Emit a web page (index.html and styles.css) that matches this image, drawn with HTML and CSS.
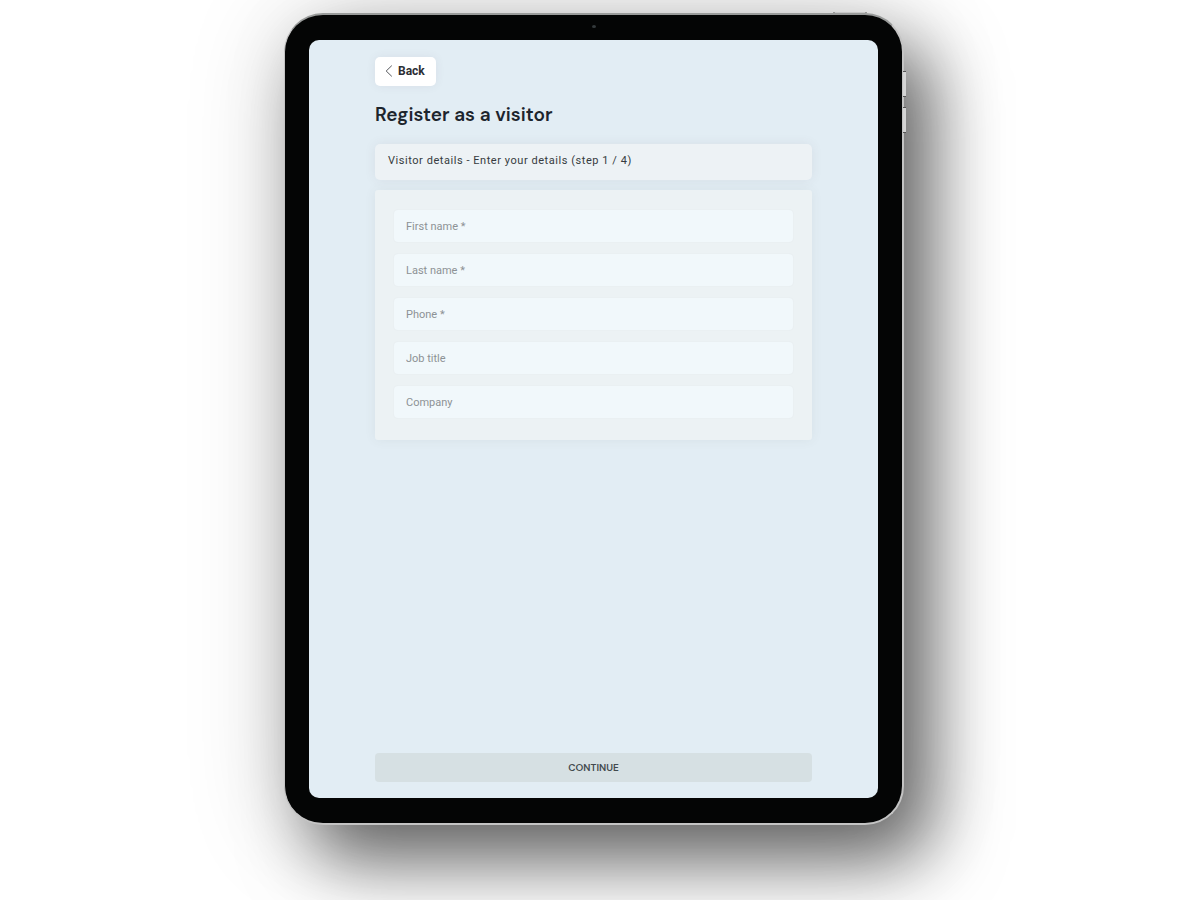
FILE: index.html
```
<!DOCTYPE html>
<html lang="en">
<head>
    <meta charset="UTF-8">
    <meta name="viewport" content="width=device-width, initial-scale=1.0">
    <title>Register as a visitor</title>
    <link rel="stylesheet" href="styles.css">
</head>
<body>
    <div class="stage">
        <div class="tablet">
            <span class="camera"></span>
            <span class="power-button"></span>
            <span class="volume-button up"></span>
            <span class="volume-button down"></span>
            <form class="screen" id="visitorForm">
                <button type="button" class="back-button">
                    <svg width="8" height="12" viewBox="0 0 8 12" fill="none" stroke="currentColor" stroke-width="0.8" aria-hidden="true">
                        <path d="M6.8 0.6 L1.2 6 L6.8 11.4"/>
                    </svg>
                    Back
                </button>
                <h1>Register as a visitor</h1>
                <div class="step">Visitor details - Enter your details (step 1 / 4)</div>
                <div class="fields">
                    <input type="text" name="firstName" placeholder="First name *" aria-label="First name" required>
                    <input type="text" name="lastName" placeholder="Last name *" aria-label="Last name" required>
                    <input type="tel" name="phone" placeholder="Phone *" aria-label="Phone" required>
                    <input type="text" name="jobTitle" placeholder="Job title" aria-label="Job title">
                    <input type="text" name="company" placeholder="Company" aria-label="Company">
                </div>
                <button type="submit" class="continue-button">CONTINUE</button>
            </form>
        </div>
    </div>
</body>
</html>
```
FILE: styles.css
```
* {
    box-sizing: border-box;
}
body {
    margin: 0;
    background-color: #fff;
    font-family: Roboto, 'Liberation Sans', sans-serif;
    color: #1d252d;
}
.stage {
    display: flex;
    justify-content: center;
    min-height: 100vh;
    padding: 13px 12px 75px 0;
    overflow: hidden;
}
/* the tablet frame */
.tablet {
    position: relative;
    display: flex;
    width: 100%;
    max-width: 620px;
    padding: 25px 24px;
    border: 2px solid #c4c4c4;
    border-top-color: #9a9c9b;
    border-left-width: 1px;
    border-radius: 39px;
    background-color: #040505;
    box-shadow: 28px 36px 70px rgba(0, 0, 0, 0.56), 0 10px 100px rgba(0, 0, 0, 0.18);
}
.camera {
    position: absolute;
    top: 10px;
    left: 50%;
    width: 4px;
    height: 3px;
    margin-left: -2px;
    border-radius: 50%;
    background-color: #343a3c;
}
.power-button {
    position: absolute;
    top: -3px;
    right: 35px;
    width: 34px;
    height: 1px;
    background-color: #c8c8c8;
    border-left: 2px solid #999;
    border-right: 2px solid #999;
}
.volume-button {
    position: absolute;
    right: -4px;
    width: 3px;
    height: 26px;
    background-color: #d4d4d4;
    border-top: 1px solid #555;
    border-bottom: 1px solid #555;
}
.volume-button.up {
    top: 56px;
}
.volume-button.down {
    top: 92px;
}
.screen {
    display: flex;
    flex-direction: column;
    flex: 1;
    min-width: 0;
    padding: 17px 66px 16px;
    border-radius: 10px;
    background-color: #e2edf4;
}
button {
    border: none;
    font-family: inherit;
    cursor: pointer;
}
.back-button {
    display: flex;
    align-items: center;
    align-self: flex-start;
    gap: 5px;
    height: 29px;
    padding: 0 11px 1px 10px;
    border-radius: 5px;
    background-color: #fff;
    box-shadow: 0 0 10px rgba(90, 70, 90, 0.08);
    color: #2b2d33;
    font-size: 12px;
    font-weight: 700;
}
h1 {
    margin: 16px 0;
    font-family: 'DM Sans', Inter, sans-serif;
    font-size: 19px;
    font-weight: 600;
    line-height: 26px;
}
.step {
    padding: 7px 13px 9px;
    border-radius: 5px;
    background-color: #edf2f5;
    box-shadow: 0 0 12px rgba(90, 70, 80, 0.08);
    color: #363b40;
    font-size: 11px;
    letter-spacing: 0.05em;
    line-height: 20px;
}
.fields {
    display: flex;
    flex-direction: column;
    gap: 12px;
    margin: 10px 0 20px;
    padding: 20px 19px 22px;
    border-radius: 3px;
    background-color: #ecf2f4;
    box-shadow: 0 0 12px rgba(90, 80, 70, 0.07);
}
.fields input {
    width: 100%;
    height: 32px;
    padding: 0 12px;
    border: none;
    border-radius: 4px;
    background-color: #f1f8fb;
    box-shadow: 0 0 2px rgba(60, 60, 80, 0.06);
    color: #363b40;
    font-family: inherit;
    font-size: 11px;
}
.fields input::placeholder {
    color: #8d9295;
    opacity: 1;
}
.continue-button {
    height: 29px;
    margin-top: auto;
    border-radius: 4px;
    background-color: #d6e0e3;
    color: #424a4e;
    font-family: 'DM Sans', Inter, sans-serif;
    font-size: 10px;
    font-weight: 600;
}
```
